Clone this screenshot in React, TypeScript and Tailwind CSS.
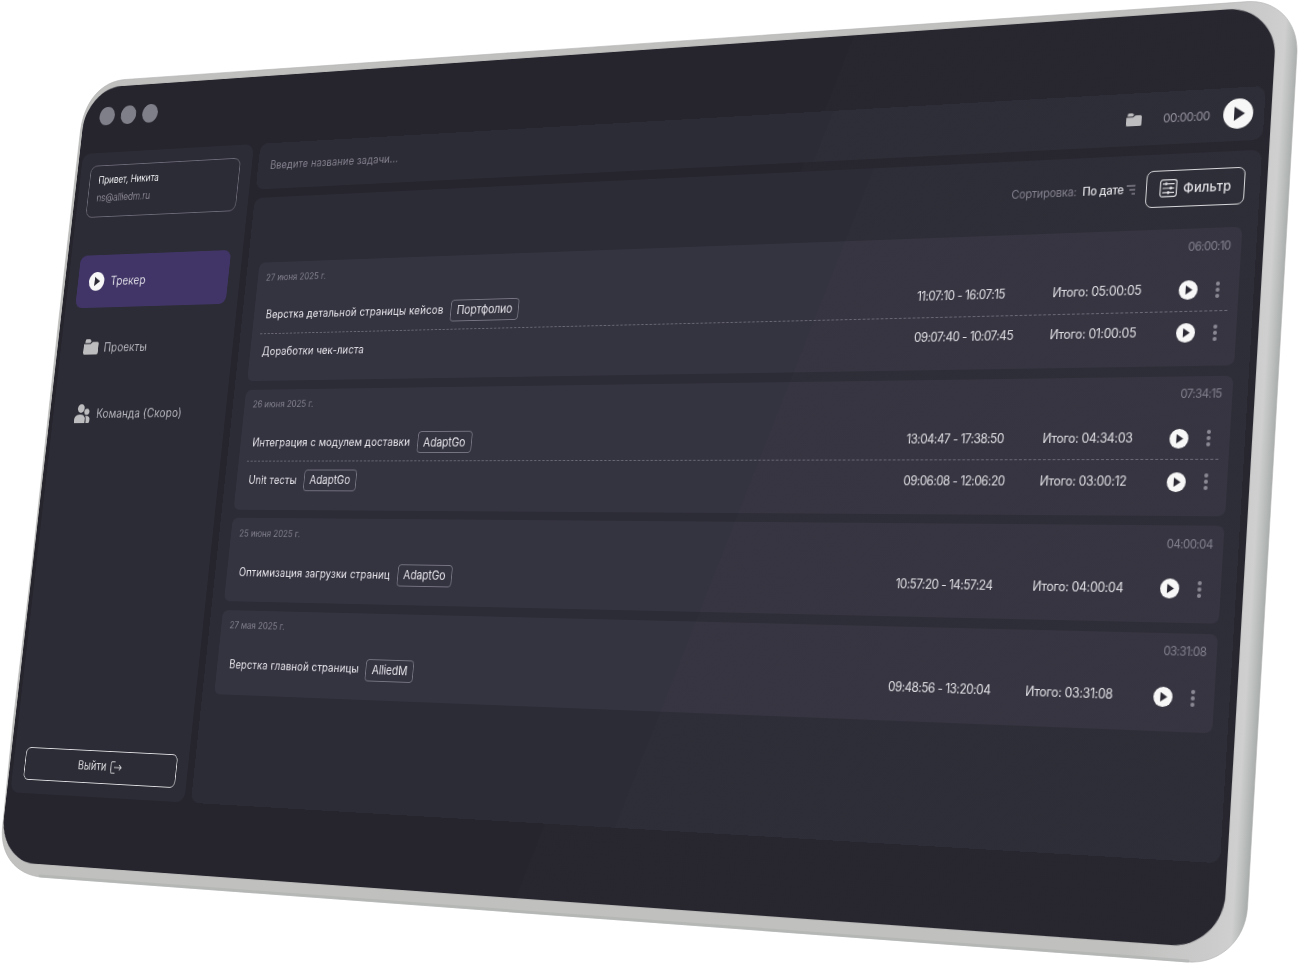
import React from 'react';

const W = 1440;
const H = 900;

type Point = [number, number];

// Projects a W x H rectangle onto four corners: top left, top right, bottom right, bottom left.
function project([p0, p1, p2, p3]: Point[]): string {
  const sx = p0[0] - p1[0] + p2[0] - p3[0];
  const sy = p0[1] - p1[1] + p2[1] - p3[1];
  const dx1 = p1[0] - p2[0];
  const dx2 = p3[0] - p2[0];
  const dy1 = p1[1] - p2[1];
  const dy2 = p3[1] - p2[1];
  const den = dx1 * dy2 - dx2 * dy1;
  const g = (sx * dy2 - dx2 * sy) / den;
  const h = (dx1 * sy - sx * dy1) / den;
  const a = p1[0] - p0[0] + g * p1[0];
  const b = p3[0] - p0[0] + h * p3[0];
  const d = p1[1] - p0[1] + g * p1[1];
  const e = p3[1] - p0[1] + h * p3[1];
  const m = [a / W, d / W, 0, g / W, b / H, e / H, 0, h / H, 0, 0, 1, 0, p0[0], p0[1], 0, 1];
  return `matrix3d(${m.map((n) => n.toFixed(9)).join(',')})`;
}

const transform = project([
  [87.2, 88.5],
  [1277.6, 6],
  [1222.4, 948.8],
  [-1, 861.2],
]);

type Task = { name: string; tag?: string; time: string; total: string };
type Day = { date: string; total: string; tasks: Task[] };

const days: Day[] = [
  {
    date: '27 июня 2025 г.',
    total: '06:00:10',
    tasks: [
      { name: 'Верстка детальной страницы кейсов', tag: 'Портфолио', time: '11:07:10 - 16:07:15', total: '05:00:05' },
      { name: 'Доработки чек-листа', time: '09:07:40 - 10:07:45', total: '01:00:05' },
    ],
  },
  {
    date: '26 июня 2025 г.',
    total: '07:34:15',
    tasks: [
      { name: 'Интеграция с модулем доставки', tag: 'AdaptGo', time: '13:04:47 - 17:38:50', total: '04:34:03' },
      { name: 'Unit тесты', tag: 'AdaptGo', time: '09:06:08 - 12:06:20', total: '03:00:12' },
    ],
  },
  {
    date: '25 июня 2025 г.',
    total: '04:00:04',
    tasks: [{ name: 'Оптимизация загрузки страниц', tag: 'AdaptGo', time: '10:57:20 - 14:57:24', total: '04:00:04' }],
  },
  {
    date: '27 мая 2025 г.',
    total: '03:31:08',
    tasks: [{ name: 'Верстка главной страницы', tag: 'AlliedM', time: '09:48:56 - 13:20:04', total: '03:31:08' }],
  },
];

function PlayIcon({ className }: { className: string }) {
  return (
    <svg viewBox="0 0 30 30" className={className}>
      <circle cx="15" cy="15" r="15" fill="#f7f7f7" />
      <path d="M11 8v14l10.8-7z" fill="#2a2833" />
    </svg>
  );
}

function FolderIcon({ className }: { className: string }) {
  return (
    <svg viewBox="0 0 20 16" preserveAspectRatio="none" className={className} fill="#bdbdbf">
      <path d="M1.6 3.6V2Q1.6 0 3.4 0h3.8q1 0 1.6.8L10 2.3 8.6 3.7Q8.2 4 7.7 4H1.4z" />
      <path d="M0 5.2h8.400q.7 0 1.200-.5l1.700-1.500q.4-.4 1-.4H18q2 0 2 2V14q0 2-2 2H2q-2 0-2-2z" />
    </svg>
  );
}

function UsersIcon() {
  return (
    <svg viewBox="0 0 22 22" className="h-[22px] w-[22px]" fill="#bdbdbf">
      <ellipse cx="8.6" cy="5" rx="4.8" ry="5" />
      <ellipse cx="17" cy="8.8" rx="3.6" ry="3.6" />
      <path d="M0 22v-3.4Q0 12 7 12h1.6q6.6 0 6.6 6.6V22z" />
      <path d="M16.6 22v-3.6q0-2.6-1.4-4.6 6.8-1 6.8 4.4V20q0 2-2 2z" />
    </svg>
  );
}

function Bezel() {
  return (
    <svg viewBox="0 0 1299 963" className="h-[963px] w-[1299px] [grid-area:1/1]">
      <defs>
        <linearGradient id="edge" gradientUnits="userSpaceOnUse" x1="1180" y1="45" x2="1298" y2="52">
          <stop offset="0" stopColor="#c0c1bf" />
          <stop offset="0.7" stopColor="#cbcbcb" />
          <stop offset="0.88" stopColor="#cfcfcf" />
          <stop offset="0.92" stopColor="#c2c5c3" />
          <stop offset="1" stopColor="#a9adab" />
        </linearGradient>
      </defs>
      <path
        d="M2.500 828 13.300 720 32.500 560 58.800 320 80 135C83.500 100 102 81.500 125 79.500L1248 1.600C1277 0 1298 22 1297 52L1247.500 908C1245 942 1218 964 1188 962L40 877C16 874 0 855 2.500 828Z"
        fill="url(#edge)"
        stroke="#b2b4b1"
        strokeWidth="0.6"
      />
      <path d="M40 876 1188 961" stroke="#a9adab" strokeOpacity="0.5" strokeWidth="3" strokeLinecap="round" />
    </svg>
  );
}

function Sidebar() {
  return (
    <aside className="flex w-[243px] shrink-0 flex-col rounded-[11px] bg-[#2c2c36] pl-[14px] pr-[16px] pt-[15px] pb-[15px]">
      <div className="flex h-[62px] flex-col rounded-[9px] border border-[#6b6977] pl-[12px] pt-[7px]">
        <span className="text-[11.5px] leading-[20px] tracking-[0px] text-[#ececf0]">Привет, Никита</span>
        <span className="text-[12px] leading-[22px] tracking-[-0.25px] text-[#85838f]">ns@alliedm.ru</span>
      </div>
      <nav className="mt-[45px] flex flex-col gap-[16px] text-[14px] tracking-[0.2px] text-[#b5b4bc]">
        <a className="flex h-[61.5px] items-center gap-[9px] rounded-[9px] bg-[#413567] pl-[16px] text-[#dcdae4]">
          <PlayIcon className="h-[22px] w-[22px]" />
          Трекер
        </a>
        <a className="flex h-[61.5px] items-center gap-[8px] pl-[19px]">
          <FolderIcon className="h-[18px] w-[21px]" />
          Проекты
        </a>
        <a className="flex h-[61.5px] items-center gap-[9px] pl-[17px]">
          <UsersIcon />
          Команда (Скоро)
        </a>
      </nav>
      <button className="ml-[2px] mr-[-1px] mt-auto flex h-[37px] items-center justify-center gap-[5px] rounded-[7px] border border-[#dcdce0] text-[13px] tracking-[0.1px] text-[#dcdce0]">
        Выйти
        <svg viewBox="0 0 16 14" className="h-[14px] w-[16px]" fill="none" stroke="#dcdce0" strokeWidth="1.1">
          <path d="M6.5.8H2Q.8.8.8 2v10q0 1.200 1.200 1.200h4.500M5 7h10M12 4.200 15 7l-3 2.800" />
        </svg>
      </button>
    </aside>
  );
}

function TaskRow({ task, divided }: { task: Task; divided: boolean }) {
  return (
    <div
      className={
        divided
          ? 'flex h-[42px] items-center border-t border-dashed border-[#6b6a76] pl-[5px] pr-[9px] pt-px'
          : 'flex h-[41px] items-center pl-[5px] pr-[9px] pt-[1.500px]'
      }
    >
      <div className="flex grow items-center gap-[9px] text-[12.5px] tracking-[0.2px]">
        <span className="text-[#e8e7ec]">{task.name}</span>
        {task.tag && (
          <span className="flex h-[24px] items-center rounded-[4px] border border-[#777583] px-[7px] text-[13px] tracking-[-0.1px] text-[#e4e3e8]">
            {task.tag}
          </span>
        )}
      </div>
      <span className="w-[145px] shrink-0 text-[12.5px] tracking-[-0.5px] text-[#e0dfe4]">{task.time}</span>
      <span className="w-[129.500px] shrink-0 text-[12.5px] tracking-[-0.3px] text-[#e0dfe4]">Итого: {task.total}</span>
      <PlayIcon className="mr-[18px] h-[19px] w-[19px] shrink-0" />
      <svg viewBox="0 0 4 16" className="h-[16px] w-[4px] shrink-0" fill="#8b8a94">
        <circle cx="2" cy="2" r="2" />
        <circle cx="2" cy="8" r="2" />
        <circle cx="2" cy="14" r="2" />
      </svg>
    </div>
  );
}

function DayCard({ day }: { day: Day }) {
  return (
    <section className="rounded-[7px] bg-[rgba(208,190,236,0.055)] pl-[11.500px] pr-[10px] pb-[12.500px]">
      <div className="flex h-[39.5px] justify-between pt-[9.500px] leading-[16px] text-[#83818e]">
        <span className="text-[10.5px] tracking-[0px]">{day.date}</span>
        <span className="text-[11.5px] tracking-[-0.6px]">{day.total}</span>
      </div>
      {day.tasks.map((task, i) => (
        <TaskRow key={task.name} task={task} divided={i > 0} />
      ))}
    </section>
  );
}

function TopBar() {
  return (
    <div className="flex h-[52.5px] items-center rounded-[10px] bg-[#2c2c36] bg-[linear-gradient(109deg,transparent_60%,rgba(255,255,255,0.006)_60%)] pl-[16.500px] pr-[11px]">
      <span className="grow text-[12.5px] tracking-[0.15px] text-[#83818e]">Введите название задачи...</span>
      <FolderIcon className="h-[13px] w-[16px]" />
      <span className="ml-[22px] w-[61px] pt-px text-[12px] tracking-[-0.6px] text-[#94929e]">00:00:00</span>
      <PlayIcon className="h-[30px] w-[30px]" />
    </div>
  );
}

function Toolbar() {
  return (
    <div className="flex items-center justify-end">
      <span className="text-[11.5px] tracking-[-0.2px] text-[#83818e]">Сортировка:</span>
      <span className="ml-[6px] text-[11.5px] font-medium tracking-[-0.25px] text-[#e4e3e8]">По дате</span>
      <svg viewBox="0 0 9 10" className="ml-[3px] mr-[11px] h-[10px] w-[9px]" stroke="#a9a8b2" strokeWidth="1.1">
        <path d="M0 1h9M3 5h6M5.500 9H9" />
      </svg>
      <button className="flex h-[37.5px] w-[99.500px] items-center gap-[6px] rounded-[7px] border-[1.500px] border-[#d6d6da] pl-[13px] text-[13px] font-medium tracking-[0.1px] text-[#e0dfe4]">
        <svg viewBox="0 0 18 18" className="h-[18px] w-[18px] shrink-0" fill="none" stroke="#dcdce0" strokeWidth="1.2">
          <rect x="0.700" y="0.700" width="16.600" height="16.600" rx="2.500" />
          <path d="M3 4.600h12M3 9h12M3 13.400h12" />
          <g fill="#e6e6ea" stroke="none">
            <circle cx="6.500" cy="4.600" r="1.400" />
            <circle cx="11.500" cy="9" r="1.400" />
            <circle cx="9" cy="13.400" r="1.400" />
          </g>
        </svg>
        Фильтр
      </button>
    </div>
  );
}

export default function App() {
  return (
    <div className="grid h-[963px] w-[1299px] overflow-hidden bg-white font-['Inter','Liberation_Sans',sans-serif]">
      <Bezel />
      <div
        className="flex h-[900px] w-[1440px] origin-top-left flex-col rounded-[50px] bg-[#26252e] bg-[linear-gradient(109deg,transparent_56.600%,rgba(255,255,255,0.007)_56.600%)] shadow-[0_0_1px_rgba(38,37,46,0.6)] [grid-area:1/1]"
        style={{ transform }}
      >
        <div className="flex h-[79px] shrink-0 gap-[9px] pl-[23px] pt-[24px]">
          <i className="h-[22px] w-[22px] rounded-full bg-[#7f7f89]" />
          <i className="h-[22px] w-[22px] rounded-full bg-[#7f7f89]" />
          <i className="h-[22px] w-[22px] rounded-full bg-[#7f7f89]" />
        </div>
        <div className="flex h-[742.500px] gap-[9px] pl-[5px] pr-[7px]">
          <Sidebar />
          <div className="flex grow flex-col gap-[10px]">
            <TopBar />
            <main className="grow rounded-[10px] bg-[#2c2c36] bg-[linear-gradient(109deg,transparent_54.400%,rgba(255,255,255,0.007)_54.400%)] px-[15.500px] pt-[16px]">
              <Toolbar />
              <div className="mt-[22px] flex flex-col gap-[9.600px]">
                {days.map((day) => (
                  <DayCard key={day.date} day={day} />
                ))}
              </div>
            </main>
          </div>
        </div>
      </div>
    </div>
  );
}
